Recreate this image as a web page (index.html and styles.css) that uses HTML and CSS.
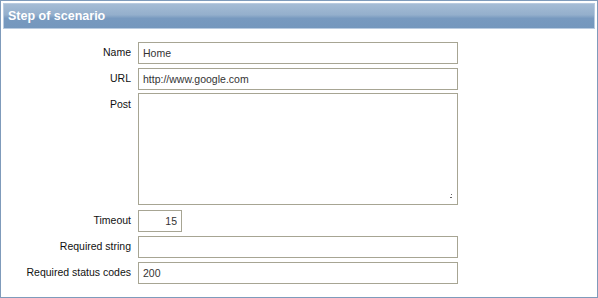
FILE: index.html
```html
<!DOCTYPE html>
<html>
<head>
  <title>Step of scenario</title>
  <link rel="stylesheet" href="styles.css">
</head>
<body>
  <div class="frame">
    <div class="frame-header">Step of scenario</div>
    <form class="step-form">
      <label class="field-label" for="name">Name</label>
      <input class="field-input wide" type="text" id="name" value="Home">

      <label class="field-label" for="url">URL</label>
      <input class="field-input wide" type="text" id="url" value="http://www.google.com">

      <label class="field-label" for="post">Post</label>
      <textarea class="field-input wide post-area" id="post"></textarea>

      <label class="field-label" for="timeout">Timeout</label>
      <input class="field-input short" type="text" id="timeout" value="15">

      <label class="field-label" for="required">Required string</label>
      <input class="field-input wide" type="text" id="required" value="">

      <label class="field-label" for="status">Required status codes</label>
      <input class="field-input wide" type="text" id="status" value="200">
    </form>
  </div>
</body>
</html>
```

FILE: styles.css
```css
body {
  margin: 0;
  padding: 0;
  font-family: "Liberation Sans", Arial, sans-serif;
  font-size: 10.5px;
  background: #fff;
}

.frame {
  width: 592px;
  height: 292px;
  border: 1px solid #7f9bbb;
  padding: 2px;
  background: #fff;
}

.frame-header {
  height: 24px;
  line-height: 25px;
  padding-left: 4px;
  border: 1px solid #b9cbe0;
  background: linear-gradient(180deg, #a5bcd5 0%, #94afcc 45%, #7799bf 60%, #7497bd 100%);
  color: #fff;
  font-weight: bold;
  font-size: 12.5px;
}

.step-form {
  display: grid;
  grid-template-columns: 128px auto;
  column-gap: 7px;
  row-gap: 4px;
  padding-top: 13px;
  justify-items: start;
}

.field-label {
  justify-self: end;
  padding-top: 4px;
  color: #111;
}

.field-input {
  box-sizing: border-box;
  height: 22px;
  margin: 0;
  border: 1px solid #a7a593;
  padding: 2px 4px;
  font-family: "Liberation Sans", Arial, sans-serif;
  font-size: 10.5px;
  color: #333;
  background: #fff;
  outline: none;
}

.wide {
  width: 320px;
}

.short {
  width: 44px;
  text-align: right;
}

/* small dotted grip instead of the default resize lines */
.post-area {
  height: 112px;
  resize: none;
  margin-top: -1px;
  margin-bottom: 1px;
  background:
    linear-gradient(#666, #666) no-repeat right 6px bottom 6px / 1px 1px,
    linear-gradient(#666, #666) no-repeat right 5px bottom 9px / 1px 1px,
    linear-gradient(#666, #666) no-repeat right 5px bottom 6px / 1px 1px,
    #fff;
}
```
